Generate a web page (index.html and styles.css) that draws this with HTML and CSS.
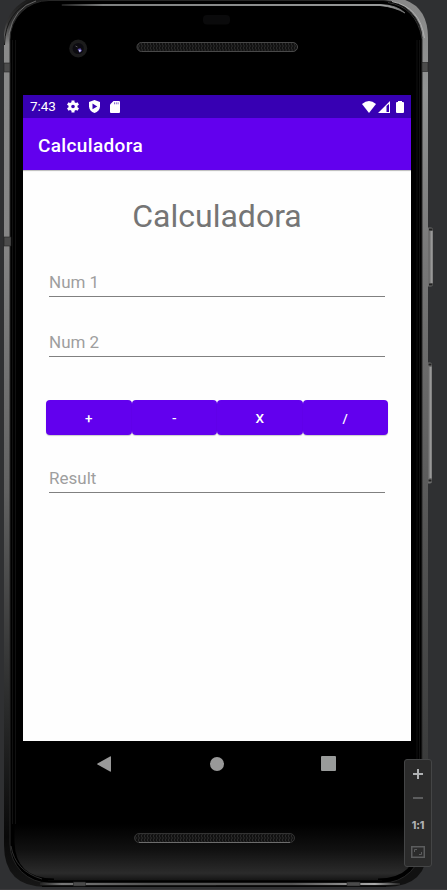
FILE: index.html
```html
<!DOCTYPE html>
<html lang="es">
<head>
<meta charset="utf-8">
<title>Calculadora</title>
<link rel="stylesheet" href="styles.css">
</head>
<body>
<div class="emulator">
  <svg class="frame" width="447" height="890" viewBox="0 0 447 890" aria-hidden="true">
    <defs>
      <linearGradient id="rim" x1="0" y1="0" x2="0" y2="890" gradientUnits="userSpaceOnUse">
        <stop offset="0" stop-color="#1c1c1c"/><stop offset=".025" stop-color="#333"/><stop offset=".05" stop-color="#8a8a8a"/><stop offset=".27" stop-color="#858585"/><stop offset=".55" stop-color="#626262"/><stop offset=".8" stop-color="#292a2a"/><stop offset=".94" stop-color="#090909"/><stop offset="1" stop-color="#171717"/>
      </linearGradient>
      <linearGradient id="rimRight" x1="0" y1="0" x2="0" y2="890" gradientUnits="userSpaceOnUse">
        <stop offset="0" stop-color="#888"/><stop offset=".1" stop-color="#929494"/><stop offset=".3" stop-color="#777"/><stop offset=".6" stop-color="#555"/><stop offset=".86" stop-color="#3a3b3b"/><stop offset=".95" stop-color="#111"/>
      </linearGradient>
      <linearGradient id="chin" x1="0" y1="0" x2="0" y2="1">
        <stop offset="0" stop-color="#000"/><stop offset=".45" stop-color="#101010"/><stop offset=".88" stop-color="#2b2b2b"/><stop offset="1" stop-color="#161616"/>
      </linearGradient>
      <linearGradient id="shine" x1="0" y1="0" x2="1" y2="0">
        <stop offset="0" stop-color="#222"/><stop offset=".12" stop-color="#8c8e8e"/><stop offset=".93" stop-color="#a8aaaa"/><stop offset="1" stop-color="#777"/>
      </linearGradient>
      <linearGradient id="bottomLine" x1="0" y1="0" x2="1" y2="0">
        <stop offset="0" stop-color="#222"/><stop offset=".06" stop-color="#777"/><stop offset=".3" stop-color="#555"/><stop offset=".7" stop-color="#555"/><stop offset=".93" stop-color="#aaa"/><stop offset="1" stop-color="#222"/>
      </linearGradient>
      <pattern id="mesh" width="3" height="4" patternUnits="userSpaceOnUse">
        <rect width="3" height="4" fill="#111"/><path d="M0 0l1.500 2L0 4" fill="none" stroke="#3a3a3a" stroke-width=".7"/>
      </pattern>
    </defs>
    <rect y="889" width="447" height="1" fill="#3c3b3d"/>
    <path d="M216-2V887H46Q4 887 4 845V38Q4 10 30-2z" fill="url(#rim)"/>
    <path d="M216-2H398Q428 4 428 38V845Q428 887 386 887H216z" fill="url(#rimRight)"/>
    <rect x="10" y=".5" width="412" height="882.500" rx="39" fill="#000" stroke="#262626"/>
    <path d="M4.500 45Q5 11 35-.5" fill="none" stroke="#171717"/>
    <path d="M9 34Q14 7 36 1" fill="none" stroke="#777" stroke-width=".8"/>
    <path d="M392 1.500Q420 7 424.500 38" fill="none" stroke="#b0b0b0"/>
    <path d="M388 2.500Q416 7 422 38" fill="none" stroke="#333"/>
    <path d="M12.500 40V842M15.500 40V838M417 40V840M419.500 40V840" stroke="#111" fill="none"/>
    <path d="M13 824H418V842Q418 880 378 880H54Q13 880 13 840z" fill="url(#chin)"/>
    <path d="M13 824V842Q14 880 54 880M418 824V842Q418 880 378 880" fill="none" stroke="#000" stroke-width="3"/>
    <path d="M62 4.500H380Q397 5 405 13Q395 7 380 5.500H62z" fill="url(#shine)" stroke="url(#shine)" stroke-width=".8"/>
    <path d="M48 880.500H382M42 886.500H386" stroke="#060606"/>
    <rect x="40" y="883" width="360" height="2" fill="url(#bottomLine)"/>
    <path d="M11 846Q15 871 42 879" fill="none" stroke="#444" stroke-width=".7"/>
    <g fill="#4b4b4b" stroke="#222" stroke-width=".6">
      <rect x="4" y="63" width="6" height="9"/><rect x="4" y="237" width="7" height="9"/><rect x="422" y="62.500" width="6" height="9"/><rect x="73.500" y="882" width="12" height="4"/><rect x="347" y="882" width="13" height="4"/>
    </g>
    <path d="M428 227.500h3q2 0 2 2v55q0 2-2 2h-3zM428 362.500h2q2 0 2 2v117q0 2-2 2h-2z" fill="#6d6d6d"/>
    <path d="M431.500 231v52M430.500 367v111" stroke="#999" stroke-width="2"/>
    <path d="M429 229.500h3.500M429 284.500h3.500M428.500 364.500h3M428.500 480.500h3" stroke="#222" stroke-width="2"/>
    <rect x="203" y="15" width="27" height="9.500" rx="4" fill="#0a0a0b"/>
    <circle cx="78.200" cy="48.500" r="9" fill="#1c1c1c"/><circle cx="78.200" cy="48.500" r="5.600" fill="#0c0b10"/>
    <path d="M75.500 46l2 1" stroke="#555"/><path d="M77.500 49l3-.8 1.500 2.500-2.500 2z" fill="#5a4bab"/><circle cx="79.800" cy="50.800" r="1" fill="#d8d8ea"/>
    <rect x="137" y="42.500" width="160.500" height="9" rx="4.500" fill="url(#mesh)" stroke="#484848"/>
    <rect x="134.500" y="833.500" width="160" height="9" rx="4.500" fill="url(#mesh)" stroke="#333"/>
    <path d="M139 842.500H290" stroke="#6c6c6c"/>
  </svg>

  <main class="screen">
    <header class="status">
      <span class="time">7:43</span>
      <svg class="gear" width="12" height="13" viewBox="2 1.500 20 21"><g fill="none" stroke="#fff"><circle cx="12" cy="12" r="5.300" stroke-width="4.500"/><path d="M12 1.800v4M12 18.200v4M3.200 6.900l3.500 2M17.300 15.100l3.500 2M3.200 17.100l3.500-2M17.300 8.900l3.500-2" stroke-width="5"/></g></svg>
      <svg class="shield" width="11" height="13" viewBox="0 0 11 13"><path fill="#fff" d="M5.500 0L11 2v4.300c0 3.200-2.200 5.600-5.500 6.700C2.200 11.900 0 9.500 0 6.300V2z"/><path fill="#3700b3" d="M3.500 3.500L8.300 6.400 3.500 9.300z"/></svg>
      <svg class="card" width="10" height="12" viewBox="0 0 10 12"><path fill="#fff" d="M3.500 0H9q1 0 1 1v10q0 1-1 1H1q-1 0-1-1V3.500z"/><path d="M4.500 1.300v2M6.300 1.300v2M8.100 1.300v2" stroke="#3700b3" stroke-width=".6"/></svg>
      <span class="signals">
        <svg width="14" height="12" viewBox="0 0 14 12"><path fill="#fff" d="M0 3Q7-3 14 3L7 12z"/></svg>
        <svg width="12" height="12" viewBox="0 0 12 12"><path fill="#fff" fill-rule="evenodd" d="M12 0v12H0zM8.500 5v6H11V3z"/></svg>
        <svg class="battery" width="8" height="12" viewBox="0 0 8 12"><path fill="#fff" d="M2 0h4v1h1q1 0 1 1v9q0 1-1 1H1q-1 0-1-1V2q0-1 1-1h1z"/></svg>
      </span>
    </header>
    <div class="appbar">Calculadora</div>
    <section class="content">
      <h1>Calculadora</h1>
      <div class="field">Num 1</div>
      <div class="field second">Num 2</div>
      <div class="ops"><button>+</button><button>-</button><button>X</button><button>/</button></div>
      <div class="field">Result</div>
    </section>
    <nav class="nav">
      <svg width="14" height="16" viewBox="0 0 14 16"><path fill="#999" d="M13 .5q1-.5 1 .5v14q0 1-1 .5L.5 8.500q-.7-.5 0-1z"/></svg>
      <svg width="14" height="14" viewBox="0 0 14 14"><circle cx="7" cy="7" r="7" fill="#999"/></svg>
      <svg width="15" height="15" viewBox="0 0 15 15"><rect width="15" height="15" rx="1" fill="#999b9a"/></svg>
    </nav>
  </main>

  <aside class="zoom">
    <svg width="10" height="10" viewBox="0 0 10 10"><path d="M0 5h10M5 0v10" stroke="#afb1b3" stroke-width="2"/></svg>
    <svg width="10" height="10" viewBox="0 0 10 10"><path d="M0 5h10" stroke="#5c5d5e" stroke-width="2"/></svg>
    <span class="ratio">1:1</span>
    <svg width="14" height="12" viewBox="0 0 14 12"><path d="M.75.75h12.500v10.500H.75z" fill="none" stroke="#5c5d5e" stroke-width="1.500"/><path d="M3.500 6V3.500H6M8 8.500h2.500V6" fill="none" stroke="#5c5d5e"/></svg>
  </aside>
</div>
</body>
</html>
```

FILE: styles.css
```css
* { box-sizing: border-box; }
body { margin: 0; background: #2f3032; font-family: Roboto, sans-serif; overflow: hidden; }
svg { display: block; flex: none; }
.emulator { position: relative; width: 447px; height: 890px; padding: 95px 36px 0 23px; overflow: hidden; }
.frame { position: absolute; left: 0; top: 0; }
.screen { position: relative; width: 388px; }
.status { height: 23px; display: flex; align-items: center; padding: 0 7px; background: #3700b3; color: #fff; font-size: 13.500px; }
.time { width: 37px; line-height: 23px; letter-spacing: -.1px; }
.shield { margin-left: 10px; }
.card { margin-left: 10px; }
.signals { display: flex; align-items: center; margin-left: auto; }
.signals svg + svg { margin-left: 2px; }
.signals .battery { margin-left: 6px; }
.appbar { height: 52px; padding-left: 15px; background: #6200ee; color: #fff; font-size: 19px; font-weight: 500; line-height: 55px; letter-spacing: .35px; }
.content { height: 571px; background: #fefefe; padding: 25px 23px 0; box-shadow: inset 0 2px 1px -1px #bbb; }
h1 { margin: 0 0 30px; height: 42px; font-size: 32px; font-weight: 400; line-height: 42px; text-align: center; color: #757575; }
.field { height: 30px; margin: 0 3px 30px; border-bottom: 1px solid #808080; color: #9e9e9e; font-size: 17px; line-height: 31px; }
.second { margin-bottom: 43px; }
.ops { display: flex; height: 35px; margin-bottom: 28px; }
.ops button { flex: 1; border: 0; padding: 0; border-radius: 4px; background: #6200ee; color: #fff; font: 500 13.500px Roboto, sans-serif; box-shadow: 0 1px 1px #0003; }
.nav { height: 45px; display: flex; align-items: center; justify-content: space-between; padding: 0 75px 0 74px; background: #000; }
.nav svg:nth-child(2) { margin-left: 1px; }
.zoom { position: absolute; left: 404px; top: 759px; width: 28px; height: 108px; padding: 9px 0 8px; border: 1px solid #444546; border-radius: 3px; background: #2b2b2b; display: flex; flex-direction: column; align-items: center; justify-content: space-between; }
.ratio { padding-top: 2px; color: #afb1b3; font: 800 10.500px/12px Inter, sans-serif; letter-spacing: -.2px; }
```
